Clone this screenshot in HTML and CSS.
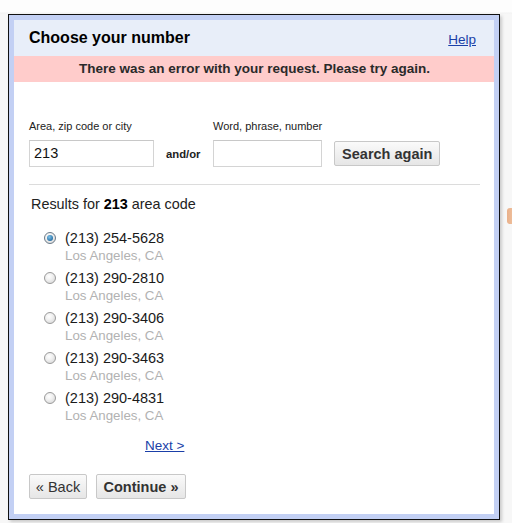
FILE: index.html
```html
<!DOCTYPE html>
<html>
<head>
<meta charset="utf-8">
<link rel="stylesheet" href="styles.css">
</head>
<body>
<div class="page">
  <div class="dialog">
    <div class="frame">
      <div class="header">
        <h1 class="title">Choose your number</h1>
        <a class="help" href="#">Help</a>
      </div>
      <div class="error">There was an error with your request. Please try again.</div>
      <div class="content">
        <div class="search">
          <div class="field">
            <label class="label">Area, zip code or city</label>
            <div class="input input-area">213</div>
          </div>
          <div class="andor">and/or</div>
          <div class="field">
            <label class="label">Word, phrase, number</label>
            <div class="input input-word"></div>
          </div>
          <button class="btn btn-bold btn-search">Search again</button>
        </div>
        <div class="rule"></div>
        <p class="results">Results for <b>213</b> area code</p>
        <ul class="numbers">
          <li class="num"><span class="radio checked"></span><div class="num-text"><div class="phone">(213) 254-5628</div><div class="city">Los Angeles, CA</div></div></li>
          <li class="num"><span class="radio"></span><div class="num-text"><div class="phone">(213) 290-2810</div><div class="city">Los Angeles, CA</div></div></li>
          <li class="num"><span class="radio"></span><div class="num-text"><div class="phone">(213) 290-3406</div><div class="city">Los Angeles, CA</div></div></li>
          <li class="num"><span class="radio"></span><div class="num-text"><div class="phone">(213) 290-3463</div><div class="city">Los Angeles, CA</div></div></li>
          <li class="num"><span class="radio"></span><div class="num-text"><div class="phone">(213) 290-4831</div><div class="city">Los Angeles, CA</div></div></li>
        </ul>
        <div class="next-row"><a class="next" href="#">Next &gt;</a></div>
        <div class="actions">
          <button class="btn btn-back">« Back</button>
          <button class="btn btn-bold btn-continue">Continue »</button>
        </div>
      </div>
    </div>
  </div>
  <div class="side-tab"></div>
</div>
</body>
</html>
```
FILE: styles.css
```css
html, body {
  margin: 0;
  padding: 0;
}
body {
  background: #f7f7f7;
  font-family: "Liberation Sans", Arial, sans-serif;
  color: #222;
  width: 512px;
  height: 523px;
  overflow: hidden;
}
.page {
  position: relative;
  padding: 14px 0 0 8px;
  background: linear-gradient(#fdfdfd 0, #fdfdfd 12px, #f2f2f2 13px, #f7f7f7 14px);
  height: 509px;
}
.dialog {
  width: 492px;
  height: 506px;
  box-sizing: border-box;
  border: 1px solid #111;
  box-shadow: 2px 2px 3px rgba(0, 0, 0, 0.18);
  background: #c3d0f4;
  padding: 5px;
}
.frame {
  background: #fff;
  height: 100%;
  display: flex;
  flex-direction: column;
}
.header {
  height: 36px;
  background: #e8eef9;
  display: flex;
  align-items: center;
  justify-content: space-between;
  padding: 0 18px 0 15px;
}
.title {
  margin: 0;
  font-size: 16px;
  font-weight: bold;
  color: #000;
}
.help {
  font-size: 13.5px;
  color: #1a3fa8;
  text-decoration: underline;
  margin-top: 2px;
}
.error {
  height: 26px;
  line-height: 26px;
  background: #ffcccb;
  text-align: center;
  font-size: 13.5px;
  font-weight: bold;
  color: #2a2a2a;
  padding-left: 1px;
}
.content {
  padding: 37px 14px 0 15px;
}
.search {
  display: flex;
  align-items: flex-end;
}
.field {
  display: flex;
  flex-direction: column;
}
.label {
  font-size: 11px;
  line-height: 14px;
  color: #222;
  margin-bottom: 7px;
}
.input {
  box-sizing: border-box;
  height: 27px;
  border: 1px solid #d4d4d4;
  border-top-color: #c8c8c8;
  font-size: 14.5px;
  line-height: 25px;
  padding-left: 4px;
  color: #111;
}
.input-area {
  width: 125px;
}
.input-word {
  width: 109px;
}
.andor {
  width: 59px;
  box-sizing: border-box;
  padding-left: 12px;
  font-size: 11.3px;
  font-weight: bold;
  line-height: 27px;
  height: 27px;
  padding-top: 1px;
}
.btn {
  font-family: "Liberation Sans", Arial, sans-serif;
  font-size: 14.5px;
  color: #333;
  height: 25px;
  box-sizing: border-box;
  border: 1px solid #c8c8c8;
  border-radius: 2px;
  background: linear-gradient(#fafafa, #e6e6e6);
  padding: 0;
  margin: 0;
  cursor: pointer;
}
.btn-bold {
  font-weight: bold;
}
.btn-search {
  width: 106px;
  margin-left: 12px;
  margin-bottom: 1px;
}
.rule {
  height: 1px;
  background: #dcdcdc;
  margin-top: 17px;
}
.results {
  margin: 11px 0 0 2px;
  font-size: 14.4px;
  line-height: 17px;
  color: #222;
}
.results b {
  color: #000;
}
.numbers {
  list-style: none;
  margin: 17px 0 0 0;
  padding: 0 0 0 15px;
}
.num {
  display: flex;
  align-items: flex-start;
  margin-bottom: 6px;
}
.radio {
  width: 12px;
  height: 12px;
  box-sizing: border-box;
  border-radius: 50%;
  border: 1px solid #9a9a9a;
  background: radial-gradient(circle at 40% 35%, #ffffff 0, #f0f0f0 40%, #d2d2d2 100%);
  margin-top: 2px;
  margin-right: 9px;
  position: relative;
  flex: none;
}
.radio.checked {
  border-color: #6a7a88;
}
.radio.checked::after {
  content: "";
  position: absolute;
  left: 2px;
  top: 2px;
  width: 6px;
  height: 6px;
  border-radius: 50%;
  background: radial-gradient(circle at 40% 35%, #7fc3ea 0, #2a73a8 70%, #1b4f7c 100%);
}
.phone {
  font-size: 14.5px;
  line-height: 17px;
  color: #1a1a1a;
}
.city {
  font-size: 13.3px;
  line-height: 17px;
  color: #b2b2b2;
}
.next-row {
  padding-left: 116px;
  margin-top: 13px;
  line-height: 16px;
}
.next {
  font-size: 13.5px;
  color: #1a3fa8;
  text-decoration: underline;
}
.actions {
  display: flex;
  gap: 9px;
  margin-top: 20px;
}
.btn-back {
  width: 58px;
}
.btn-continue {
  width: 90px;
}
.side-tab {
  position: absolute;
  left: 507px;
  top: 208px;
  width: 8px;
  height: 16px;
  border-radius: 3px;
  background: linear-gradient(90deg, #e9b08a, #f0c4a2);
}
```
